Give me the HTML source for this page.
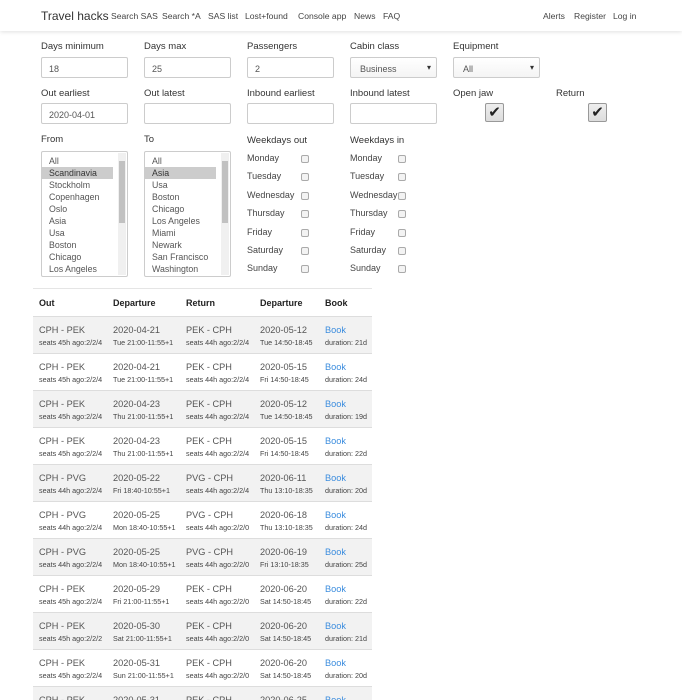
<!DOCTYPE html>
<html><head><meta charset="utf-8"><style>
*{box-sizing:border-box;margin:0;padding:0}
html{width:682px;height:700px;overflow:hidden}
body{width:682px;height:700px;overflow:hidden;background:#fff;font-family:"Liberation Sans",sans-serif;color:#333;position:relative}
.a{position:absolute;white-space:nowrap}
.nav{position:absolute;left:0;top:0;width:682px;height:31px;background:#fff;box-shadow:0 1px 4px rgba(0,0,0,.12)}
.nav span{position:absolute;top:11px;font-size:8.6px;color:#444}
.lbl{font-size:9.5px;color:#333}
.inp{position:absolute;width:87px;height:21px;border:1px solid #ccc;border-radius:2px;font-size:9px;color:#555;padding:6px 7px}
.sel{position:absolute;width:87px;height:21px;border:1px solid #ccc;border-radius:2px;font-size:9px;color:#555;padding:6px 9px;background:linear-gradient(#fff,#f4f4f4)}
.sel:after{content:"▾";position:absolute;right:5px;top:5px;font-size:8px;color:#333}
.cbx{position:absolute;width:19px;height:19px;border:1px solid #999;background:linear-gradient(#eee,#ddd);border-radius:2px;font-size:15px;line-height:18px;text-align:center;color:#222}
.lst{position:absolute;width:87px;height:126px;border:1px solid #ccc;border-radius:2px;overflow:hidden;font-size:8.8px;color:#555}
.lst div{height:12px;line-height:12px;padding-left:7px;width:71px;margin-left:0}
.lst .s{background:#ccc;color:#333}
.sb{position:absolute;right:1px;top:1px;width:8px;height:122px;background:#f0f0f0}
.sb i{position:absolute;left:1px;top:8px;width:6px;height:62px;background:#c1c1c1}
.wk{font-size:9px;color:#444}
.cb{position:absolute;width:8px;height:8px;border:1px solid #aaa;border-radius:2px;background:#f3f3f3}
.row{position:absolute;left:33px;width:339px;height:37px;border-top:1px solid #ddd}
.row.g{background:#f2f2f2}
.row span{position:absolute;white-space:nowrap}
.t1{top:8px;font-size:9.2px;color:#555}
.t2{top:21px;font-size:7.2px;color:#444}
.bk{color:#3c8dde}
.th{position:absolute;top:298px;font-size:9px;font-weight:bold;color:#222}
</style></head><body>
<div class="nav">
<span style="left:41px;top:9px;font-size:12px;color:#333">Travel hacks</span>
<span style="left:111px">Search SAS</span><span style="left:162px">Search *A</span><span style="left:208px">SAS list</span><span style="left:245px">Lost+found</span><span style="left:298px">Console app</span><span style="left:354px">News</span><span style="left:383px">FAQ</span>
<span style="left:543px">Alerts</span><span style="left:574px">Register</span><span style="left:613px">Log in</span>
</div>
<div class="a lbl" style="left:41px;top:41px">Days minimum</div>
<div class="a lbl" style="left:144px;top:41px">Days max</div>
<div class="a lbl" style="left:247px;top:41px">Passengers</div>
<div class="a lbl" style="left:350px;top:41px">Cabin class</div>
<div class="a lbl" style="left:453px;top:41px">Equipment</div>
<div class="inp" style="left:41px;top:57px">18</div>
<div class="inp" style="left:144px;top:57px">25</div>
<div class="inp" style="left:247px;top:57px">2</div>
<div class="sel" style="left:350px;top:57px">Business</div>
<div class="sel" style="left:453px;top:57px">All</div>
<div class="a lbl" style="left:41px;top:88px">Out earliest</div>
<div class="a lbl" style="left:144px;top:88px">Out latest</div>
<div class="a lbl" style="left:247px;top:88px">Inbound earliest</div>
<div class="a lbl" style="left:350px;top:88px">Inbound latest</div>
<div class="a lbl" style="left:453px;top:88px">Open jaw</div>
<div class="a lbl" style="left:556px;top:88px">Return</div>
<div class="inp" style="left:41px;top:103px">2020-04-01</div>
<div class="inp" style="left:144px;top:103px"></div>
<div class="inp" style="left:247px;top:103px"></div>
<div class="inp" style="left:350px;top:103px"></div>
<div class="cbx" style="left:485px;top:103px">✔</div>
<div class="cbx" style="left:588px;top:103px">✔</div>
<div class="a lbl" style="left:41px;top:134px">From</div>
<div class="a lbl" style="left:144px;top:134px">To</div>
<div class="a lbl" style="left:247px;top:135px">Weekdays out</div>
<div class="a lbl" style="left:350px;top:135px">Weekdays in</div>
<div class="lst" style="left:41px;top:151px;padding-top:3px"><div>All</div><div class="s">Scandinavia</div><div>Stockholm</div><div>Copenhagen</div><div>Oslo</div><div>Asia</div><div>Usa</div><div>Boston</div><div>Chicago</div><div>Los Angeles</div><span class="sb"><i></i></span></div>
<div class="lst" style="left:144px;top:151px;padding-top:3px"><div>All</div><div class="s">Asia</div><div>Usa</div><div>Boston</div><div>Chicago</div><div>Los Angeles</div><div>Miami</div><div>Newark</div><div>San Francisco</div><div>Washington</div><span class="sb"><i></i></span></div>
<div class="a wk" style="left:247px;top:149px;line-height:18.4px">Monday<br>Tuesday<br>Wednesday<br>Thursday<br>Friday<br>Saturday<br>Sunday</div>
<div class="a wk" style="left:350px;top:149px;line-height:18.4px">Monday<br>Tuesday<br>Wednesday<br>Thursday<br>Friday<br>Saturday<br>Sunday</div>
<div class="cb" style="left:301px;top:155px"></div><div class="cb" style="left:301px;top:173px"></div><div class="cb" style="left:301px;top:192px"></div><div class="cb" style="left:301px;top:210px"></div><div class="cb" style="left:301px;top:229px"></div><div class="cb" style="left:301px;top:247px"></div><div class="cb" style="left:301px;top:265px"></div>
<div class="cb" style="left:398px;top:155px"></div><div class="cb" style="left:398px;top:173px"></div><div class="cb" style="left:398px;top:192px"></div><div class="cb" style="left:398px;top:210px"></div><div class="cb" style="left:398px;top:229px"></div><div class="cb" style="left:398px;top:247px"></div><div class="cb" style="left:398px;top:265px"></div>
<div class="a" style="left:33px;top:288px;width:339px;border-top:1px solid #e5e5e5"></div>
<div class="th" style="left:39px">Out</div><div class="th" style="left:113px">Departure</div><div class="th" style="left:186px">Return</div><div class="th" style="left:260px">Departure</div><div class="th" style="left:325px">Book</div>
<div class="row g" style="top:316px"><span class="t1" style="left:6px">CPH - PEK</span><span class="t2" style="left:6px">seats 45h ago:2/2/4</span><span class="t1" style="left:80px">2020-04-21</span><span class="t2" style="left:80px">Tue 21:00-11:55+1</span><span class="t1" style="left:153px">PEK - CPH</span><span class="t2" style="left:153px">seats 44h ago:2/2/4</span><span class="t1" style="left:227px">2020-05-12</span><span class="t2" style="left:227px">Tue 14:50-18:45</span><span class="t1 bk" style="left:292px">Book</span><span class="t2" style="left:292px">duration: 21d</span></div>
<div class="row" style="top:353px"><span class="t1" style="left:6px">CPH - PEK</span><span class="t2" style="left:6px">seats 45h ago:2/2/4</span><span class="t1" style="left:80px">2020-04-21</span><span class="t2" style="left:80px">Tue 21:00-11:55+1</span><span class="t1" style="left:153px">PEK - CPH</span><span class="t2" style="left:153px">seats 44h ago:2/2/4</span><span class="t1" style="left:227px">2020-05-15</span><span class="t2" style="left:227px">Fri 14:50-18:45</span><span class="t1 bk" style="left:292px">Book</span><span class="t2" style="left:292px">duration: 24d</span></div>
<div class="row g" style="top:390px"><span class="t1" style="left:6px">CPH - PEK</span><span class="t2" style="left:6px">seats 45h ago:2/2/4</span><span class="t1" style="left:80px">2020-04-23</span><span class="t2" style="left:80px">Thu 21:00-11:55+1</span><span class="t1" style="left:153px">PEK - CPH</span><span class="t2" style="left:153px">seats 44h ago:2/2/4</span><span class="t1" style="left:227px">2020-05-12</span><span class="t2" style="left:227px">Tue 14:50-18:45</span><span class="t1 bk" style="left:292px">Book</span><span class="t2" style="left:292px">duration: 19d</span></div>
<div class="row" style="top:427px"><span class="t1" style="left:6px">CPH - PEK</span><span class="t2" style="left:6px">seats 45h ago:2/2/4</span><span class="t1" style="left:80px">2020-04-23</span><span class="t2" style="left:80px">Thu 21:00-11:55+1</span><span class="t1" style="left:153px">PEK - CPH</span><span class="t2" style="left:153px">seats 44h ago:2/2/4</span><span class="t1" style="left:227px">2020-05-15</span><span class="t2" style="left:227px">Fri 14:50-18:45</span><span class="t1 bk" style="left:292px">Book</span><span class="t2" style="left:292px">duration: 22d</span></div>
<div class="row g" style="top:464px"><span class="t1" style="left:6px">CPH - PVG</span><span class="t2" style="left:6px">seats 44h ago:2/2/4</span><span class="t1" style="left:80px">2020-05-22</span><span class="t2" style="left:80px">Fri 18:40-10:55+1</span><span class="t1" style="left:153px">PVG - CPH</span><span class="t2" style="left:153px">seats 44h ago:2/2/4</span><span class="t1" style="left:227px">2020-06-11</span><span class="t2" style="left:227px">Thu 13:10-18:35</span><span class="t1 bk" style="left:292px">Book</span><span class="t2" style="left:292px">duration: 20d</span></div>
<div class="row" style="top:501px"><span class="t1" style="left:6px">CPH - PVG</span><span class="t2" style="left:6px">seats 44h ago:2/2/4</span><span class="t1" style="left:80px">2020-05-25</span><span class="t2" style="left:80px">Mon 18:40-10:55+1</span><span class="t1" style="left:153px">PVG - CPH</span><span class="t2" style="left:153px">seats 44h ago:2/2/0</span><span class="t1" style="left:227px">2020-06-18</span><span class="t2" style="left:227px">Thu 13:10-18:35</span><span class="t1 bk" style="left:292px">Book</span><span class="t2" style="left:292px">duration: 24d</span></div>
<div class="row g" style="top:538px"><span class="t1" style="left:6px">CPH - PVG</span><span class="t2" style="left:6px">seats 44h ago:2/2/4</span><span class="t1" style="left:80px">2020-05-25</span><span class="t2" style="left:80px">Mon 18:40-10:55+1</span><span class="t1" style="left:153px">PVG - CPH</span><span class="t2" style="left:153px">seats 44h ago:2/2/0</span><span class="t1" style="left:227px">2020-06-19</span><span class="t2" style="left:227px">Fri 13:10-18:35</span><span class="t1 bk" style="left:292px">Book</span><span class="t2" style="left:292px">duration: 25d</span></div>
<div class="row" style="top:575px"><span class="t1" style="left:6px">CPH - PEK</span><span class="t2" style="left:6px">seats 45h ago:2/2/4</span><span class="t1" style="left:80px">2020-05-29</span><span class="t2" style="left:80px">Fri 21:00-11:55+1</span><span class="t1" style="left:153px">PEK - CPH</span><span class="t2" style="left:153px">seats 44h ago:2/2/0</span><span class="t1" style="left:227px">2020-06-20</span><span class="t2" style="left:227px">Sat 14:50-18:45</span><span class="t1 bk" style="left:292px">Book</span><span class="t2" style="left:292px">duration: 22d</span></div>
<div class="row g" style="top:612px"><span class="t1" style="left:6px">CPH - PEK</span><span class="t2" style="left:6px">seats 45h ago:2/2/2</span><span class="t1" style="left:80px">2020-05-30</span><span class="t2" style="left:80px">Sat 21:00-11:55+1</span><span class="t1" style="left:153px">PEK - CPH</span><span class="t2" style="left:153px">seats 44h ago:2/2/0</span><span class="t1" style="left:227px">2020-06-20</span><span class="t2" style="left:227px">Sat 14:50-18:45</span><span class="t1 bk" style="left:292px">Book</span><span class="t2" style="left:292px">duration: 21d</span></div>
<div class="row" style="top:649px"><span class="t1" style="left:6px">CPH - PEK</span><span class="t2" style="left:6px">seats 45h ago:2/2/4</span><span class="t1" style="left:80px">2020-05-31</span><span class="t2" style="left:80px">Sun 21:00-11:55+1</span><span class="t1" style="left:153px">PEK - CPH</span><span class="t2" style="left:153px">seats 44h ago:2/2/0</span><span class="t1" style="left:227px">2020-06-20</span><span class="t2" style="left:227px">Sat 14:50-18:45</span><span class="t1 bk" style="left:292px">Book</span><span class="t2" style="left:292px">duration: 20d</span></div>
<div class="row g" style="top:686px;height:14px"><span class="t1" style="left:6px">CPH - PEK</span><span class="t1" style="left:80px">2020-05-31</span><span class="t1" style="left:153px">PEK - CPH</span><span class="t1" style="left:227px">2020-06-25</span><span class="t1 bk" style="left:292px">Book</span></div>
</body></html>
